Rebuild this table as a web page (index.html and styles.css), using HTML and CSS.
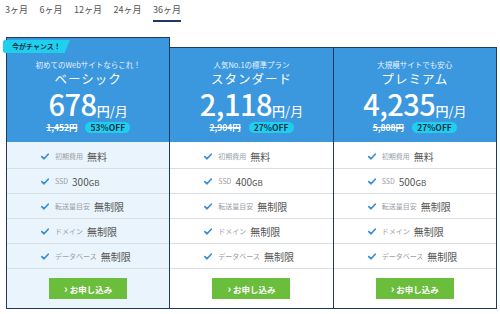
FILE: index.html
```html
<!DOCTYPE html>
<html lang="ja">
<head>
<meta charset="utf-8">
<link rel="stylesheet" href="styles.css">
</head>
<body>
<div class="page">
  <nav class="tabs">
    <span class="tab">3ヶ月</span>
    <span class="tab">6ヶ月</span>
    <span class="tab">12ヶ月</span>
    <span class="tab">24ヶ月</span>
    <span class="tab active">36ヶ月</span>
  </nav>
  <div class="plans">
    <section class="plan featured">
      <div class="ribbon">今がチャンス！</div>
      <header class="plan-head">
        <p class="sub">初めてのWebサイトならこれ！</p>
        <h2 class="name">ベーシック</h2>
        <p class="price"><span class="num">678</span><span class="yen">円</span><span class="per">/月</span></p>
        <p class="old"><s class="was">1,452円</s><span class="off">53%OFF</span></p>
      </header>
      <ul class="features">
        <li><svg class="chk" viewBox="0 0 10 8"><path d="M1 4.2 L3.8 6.8 L9 1.2" fill="none" stroke="#3b8fd8" stroke-width="2.2" stroke-linecap="round" stroke-linejoin="round"/></svg><span class="lbl">初期費用</span><span class="val">無料</span></li>
        <li><svg class="chk" viewBox="0 0 10 8"><path d="M1 4.2 L3.8 6.8 L9 1.2" fill="none" stroke="#3b8fd8" stroke-width="2.2" stroke-linecap="round" stroke-linejoin="round"/></svg><span class="lbl">SSD</span><span class="val">300<small>GB</small></span></li>
        <li><svg class="chk" viewBox="0 0 10 8"><path d="M1 4.2 L3.8 6.8 L9 1.2" fill="none" stroke="#3b8fd8" stroke-width="2.2" stroke-linecap="round" stroke-linejoin="round"/></svg><span class="lbl">転送量目安</span><span class="val">無制限</span></li>
        <li><svg class="chk" viewBox="0 0 10 8"><path d="M1 4.2 L3.8 6.8 L9 1.2" fill="none" stroke="#3b8fd8" stroke-width="2.2" stroke-linecap="round" stroke-linejoin="round"/></svg><span class="lbl">ドメイン</span><span class="val">無制限</span></li>
        <li><svg class="chk" viewBox="0 0 10 8"><path d="M1 4.2 L3.8 6.8 L9 1.2" fill="none" stroke="#3b8fd8" stroke-width="2.2" stroke-linecap="round" stroke-linejoin="round"/></svg><span class="lbl">データベース</span><span class="val">無制限</span></li>
      </ul>
      <div class="cta"><a class="btn"><span class="arr">›</span>お申し込み</a></div>
    </section>
    <section class="plan">
      <header class="plan-head">
        <p class="sub">人気No.1の標準プラン</p>
        <h2 class="name">スタンダード</h2>
        <p class="price"><span class="num">2,118</span><span class="yen">円</span><span class="per">/月</span></p>
        <p class="old"><s class="was">2,904円</s><span class="off">27%OFF</span></p>
      </header>
      <ul class="features">
        <li><svg class="chk" viewBox="0 0 10 8"><path d="M1 4.2 L3.8 6.8 L9 1.2" fill="none" stroke="#3b8fd8" stroke-width="2.2" stroke-linecap="round" stroke-linejoin="round"/></svg><span class="lbl">初期費用</span><span class="val">無料</span></li>
        <li><svg class="chk" viewBox="0 0 10 8"><path d="M1 4.2 L3.8 6.8 L9 1.2" fill="none" stroke="#3b8fd8" stroke-width="2.2" stroke-linecap="round" stroke-linejoin="round"/></svg><span class="lbl">SSD</span><span class="val">400<small>GB</small></span></li>
        <li><svg class="chk" viewBox="0 0 10 8"><path d="M1 4.2 L3.8 6.8 L9 1.2" fill="none" stroke="#3b8fd8" stroke-width="2.2" stroke-linecap="round" stroke-linejoin="round"/></svg><span class="lbl">転送量目安</span><span class="val">無制限</span></li>
        <li><svg class="chk" viewBox="0 0 10 8"><path d="M1 4.2 L3.8 6.8 L9 1.2" fill="none" stroke="#3b8fd8" stroke-width="2.2" stroke-linecap="round" stroke-linejoin="round"/></svg><span class="lbl">ドメイン</span><span class="val">無制限</span></li>
        <li><svg class="chk" viewBox="0 0 10 8"><path d="M1 4.2 L3.8 6.8 L9 1.2" fill="none" stroke="#3b8fd8" stroke-width="2.2" stroke-linecap="round" stroke-linejoin="round"/></svg><span class="lbl">データベース</span><span class="val">無制限</span></li>
      </ul>
      <div class="cta"><a class="btn"><span class="arr">›</span>お申し込み</a></div>
    </section>
    <section class="plan">
      <header class="plan-head">
        <p class="sub">大規模サイトでも安心</p>
        <h2 class="name">プレミアム</h2>
        <p class="price"><span class="num">4,235</span><span class="yen">円</span><span class="per">/月</span></p>
        <p class="old"><s class="was">5,808円</s><span class="off">27%OFF</span></p>
      </header>
      <ul class="features">
        <li><svg class="chk" viewBox="0 0 10 8"><path d="M1 4.2 L3.8 6.8 L9 1.2" fill="none" stroke="#3b8fd8" stroke-width="2.2" stroke-linecap="round" stroke-linejoin="round"/></svg><span class="lbl">初期費用</span><span class="val">無料</span></li>
        <li><svg class="chk" viewBox="0 0 10 8"><path d="M1 4.2 L3.8 6.8 L9 1.2" fill="none" stroke="#3b8fd8" stroke-width="2.2" stroke-linecap="round" stroke-linejoin="round"/></svg><span class="lbl">SSD</span><span class="val">500<small>GB</small></span></li>
        <li><svg class="chk" viewBox="0 0 10 8"><path d="M1 4.2 L3.8 6.8 L9 1.2" fill="none" stroke="#3b8fd8" stroke-width="2.2" stroke-linecap="round" stroke-linejoin="round"/></svg><span class="lbl">転送量目安</span><span class="val">無制限</span></li>
        <li><svg class="chk" viewBox="0 0 10 8"><path d="M1 4.2 L3.8 6.8 L9 1.2" fill="none" stroke="#3b8fd8" stroke-width="2.2" stroke-linecap="round" stroke-linejoin="round"/></svg><span class="lbl">ドメイン</span><span class="val">無制限</span></li>
        <li><svg class="chk" viewBox="0 0 10 8"><path d="M1 4.2 L3.8 6.8 L9 1.2" fill="none" stroke="#3b8fd8" stroke-width="2.2" stroke-linecap="round" stroke-linejoin="round"/></svg><span class="lbl">データベース</span><span class="val">無制限</span></li>
      </ul>
      <div class="cta"><a class="btn"><span class="arr">›</span>お申し込み</a></div>
    </section>
  </div>
</div>
</body>
</html>
```
FILE: styles.css
```css
* { box-sizing: border-box; margin: 0; padding: 0; }
html, body { background: #fff; }
body {
  font-family: "Noto Sans CJK JP", "Noto Sans", sans-serif;
  color: #555;
  width: 500px;
  height: 314px;
  overflow: hidden;
}
.page { padding: 0 3px 0 6px; }

.tabs {
  display: flex;
  gap: 11.5px;
  height: 37px;
  padding-top: 3px;
  margin-left: -1px;
}
.tab {
  font-size: 9px;
  line-height: 14px;
  color: #555;
  height: 18px;
}
.tab.active {
  border-bottom: 2px solid #1e3a5f;
  height: 19px;
}

.plans {
  display: flex;
  align-items: flex-end;
}
.plan {
  flex: 1;
  position: relative;
  border: 1.5px solid #1e3a5f;
  border-left: none;
  background: #fff;
}
.plan.featured {
  border-left: 1.5px solid #1e3a5f;
}
.plan.featured .features,
.plan.featured .cta { background: #eaf4fc; }

.ribbon {
  position: absolute;
  top: 2px;
  left: -4px;
  width: 67px;
  height: 13px;
  background: #1fd0ee;
  color: #17324f;
  font-size: 7px;
  font-weight: 700;
  line-height: 13px;
  padding-left: 9px;
  border-radius: 2px 0 0 2px;
  clip-path: polygon(0 0, 100% 0, 92% 100%, 0 100%);
}

.plan-head {
  background: #3b97de;
  color: #fff;
  text-align: center;
  padding: 11px 0 9px;
}
.plan.featured .plan-head { padding-top: 21px; }
.sub { font-size: 7.5px; line-height: 12px; color: #e8f3fc; }
.name { font-size: 12.5px; font-weight: 400; line-height: 16px; letter-spacing: 1px; }
.price {
  display: flex;
  justify-content: center;
  align-items: baseline;
  height: 32px;
  line-height: 32px;
}
.num, .yen, .per { display: inline-block; height: 32px; line-height: 32px; }
.num { font-size: 29px; font-weight: 500; letter-spacing: -0.5px; }
.yen { font-size: 13px; font-weight: 500; }
.per { font-size: 13px; }
.old {
  display: flex;
  justify-content: center;
  align-items: center;
  gap: 8px;
  margin-top: 2px;
  height: 12px;
}
.was { font-size: 8.5px; font-weight: 700; color: #fff; line-height: 12px; }
.off {
  background: #1fd0ee;
  color: #17324f;
  font-size: 8.5px;
  font-weight: 700;
  line-height: 11px;
  padding: 0 5px;
  border-radius: 6px;
}

.features { list-style: none; padding-top: 2px; }
.features li {
  display: flex;
  align-items: center;
  height: 25px;
  padding-left: 34px;
  border-bottom: 1px solid #d9dee3;
}
.chk { width: 8px; height: 7px; margin-right: 6px; flex: none; }
.lbl { font-size: 7px; color: #9aa0a6; margin-right: 4px; }
.val { font-size: 10px; color: #555; }
.val small { font-size: 8px; }

.cta {
  display: flex;
  justify-content: center;
  padding: 9px 0 9px;
}
.btn {
  display: block;
  width: 78px;
  height: 21px;
  background: #6bbd3c;
  color: #fff;
  font-size: 8.5px;
  font-weight: 700;
  line-height: 21px;
  text-align: center;
}
.arr { font-size: 11px; margin-right: 2px; }
```
